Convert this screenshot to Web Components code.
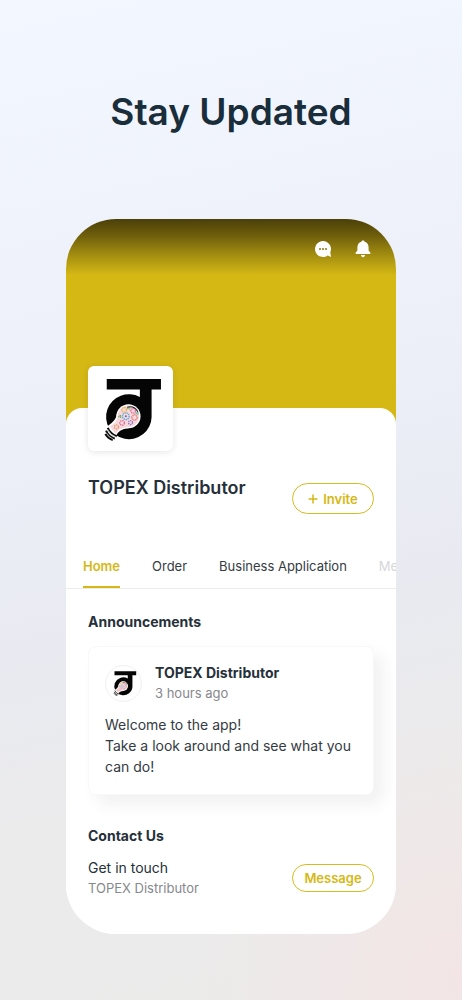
<!DOCTYPE html>
<html lang="en">
<head>
<meta charset="utf-8">
<meta name="viewport" content="width=device-width, initial-scale=1">
<title>TOPEX Distributor</title>
<style>
  body {
    margin: 0;
    min-height: 100vh;
    font-family: Inter, "Liberation Sans", sans-serif;
    color: #26303a;
    background:
      radial-gradient(circle at 100% 98%, #f3e5e5 0%, rgba(243, 229, 229, 0) 26%),
      linear-gradient(168deg, #f3f7ff 0%, #eceff8 42%, #e9eaf1 60%, #ebebec 76%, #ebebea 100%);
  }
</style>
</head>
<body>
<promo-screen heading="Stay Updated">
  <phone-frame>
    <cover-bar slot="cover"></cover-bar>
    <profile-head name="TOPEX Distributor">
      <pill-button icon="plus">Invite</pill-button>
    </profile-head>
    <tab-bar>
      <tab-link active>Home</tab-link>
      <tab-link>Order</tab-link>
      <tab-link>Business Application</tab-link>
      <tab-link faded>Me</tab-link>
    </tab-bar>
    <page-section heading="Announcements">
      <post-card author="TOPEX Distributor" time="3 hours ago">Welcome to the app!<br>Take a look around and see what you can do!</post-card>
    </page-section>
    <page-section heading="Contact Us">
      <contact-row label="Get in touch" name="TOPEX Distributor">
        <pill-button small>Message</pill-button>
      </contact-row>
    </page-section>
  </phone-frame>
</promo-screen>

<script>
class PromoScreen extends HTMLElement {
  constructor() {
    super();
    this.attachShadow({mode: "open"});
  }
  connectedCallback() {
    this.shadowRoot.innerHTML = `
      <style>
        :host { display: block; padding: 90px 66px 66px; }
        h1 {
          margin: 0 0 85px;
          font-size: 37px;
          line-height: 44px;
          font-weight: 600;
          text-align: center;
          white-space: nowrap;
          color: #192d3b;
        }
      </style>
      <h1>${this.getAttribute("heading")}</h1>
      <slot></slot>`;
  }
}

class PhoneFrame extends HTMLElement {
  constructor() {
    super();
    this.attachShadow({mode: "open"}).innerHTML = `
      <style>
        :host {
          display: block;
          overflow: hidden;
          border-radius: 50px;
          background: #fff;
        }
        .sheet {
          display: flow-root;
          position: relative;
          margin-top: -16px;
          padding-bottom: 28px;
          border-radius: 16px 16px 0 0;
          background: #fff;
        }
      </style>
      <slot name="cover"></slot>
      <main class="sheet"><slot></slot></main>`;
  }
}

class CoverBar extends HTMLElement {
  constructor() {
    super();
    this.attachShadow({mode: "open"}).innerHTML = `
      <style>
        :host {
          display: block;
          height: 205px;
          background: linear-gradient(#4b4009 0, #6d5d0b 16px, #a38d10 36px, #d5b814 56px);
        }
        div {
          display: flex;
          justify-content: flex-end;
          gap: 20px;
          padding: 20px 23px;
        }
        button {
          display: flex;
          padding: 0;
          border: 0;
          background: none;
          color: #fff;
        }
      </style>
      <div>
        <button aria-label="Messages">
          <svg width="20" height="20" viewBox="0 0 20 20">
            <path d="M10 2a8 8 0 1 0 4.700 14.500L18 18l-.7-4.700A8 8 0 0 0 10 2z" fill="currentColor"/>
            <g fill="#8a760e"><circle cx="7" cy="10" r="1"/><circle cx="10" cy="10" r="1"/><circle cx="13" cy="10" r="1"/></g>
          </svg>
        </button>
        <button aria-label="Notifications">
          <svg width="20" height="20" viewBox="0 0 20 20" fill="currentColor">
            <path d="M10 1.500c.9 0 1.500.5 1.600 1.200 2.700.7 4 2.900 4 5.700v3.200l1.600 2c.6.800.2 1.500-.6 1.500H3.400c-.8 0-1.200-.7-.6-1.500l1.600-2V8.400c0-2.800 1.300-5 4-5.700.1-.7.700-1.200 1.600-1.200z"/>
            <path d="M8 16h4c-.1 1.400-.9 2.200-2 2.200S8.100 17.400 8 16z"/>
          </svg>
        </button>
      </div>`;
  }
}

// Black letter mark with a light bulb full of coloured gears
class BrandLogo extends HTMLElement {
  constructor() {
    super();
    this.attachShadow({mode: "open"}).innerHTML = `
      <style>
        :host { display: block; }
        svg { display: block; width: 100%; height: 100%; }
      </style>
      <svg viewBox="26 18 254 254" role="img" aria-label="Logo">
        <path d="M82 57h162v31h-28v83a68 67 0 1 1-35-60V88H82z" fill="#050505"/>
        <g fill="#fff">
          <circle cx="147" cy="168" r="36"/>
          <path d="M112 160q0 20-28 38l24 32q8-24 40-26z"/>
        </g>
        <g fill="#f6d9dd">
          <circle cx="147" cy="168" r="32"/>
          <path d="M115 168q-1 16-24 31l18 22q8-19 38-21z"/>
        </g>
        <g fill="none" stroke-width="4" stroke-dasharray="4 2">
          <circle cx="139" cy="168" r="10" stroke="#5aa7dc"/>
          <circle cx="161" cy="152" r="7" stroke="#e46a9b"/>
          <circle cx="134" cy="149" r="7" stroke="#e8b14a"/>
          <circle cx="165" cy="172" r="8" stroke="#df7472"/>
          <circle cx="153" cy="187" r="6" stroke="#9779c9"/>
          <circle cx="128" cy="188" r="7" stroke="#e06d9c"/>
          <circle cx="111" cy="200" r="6" stroke="#e39b68"/>
          <circle cx="148" cy="144" r="3" stroke="#75b56c"/>
          <circle cx="173" cy="159" r="3" stroke="#59ae90"/>
          <circle cx="121" cy="169" r="3" stroke="#70b06a"/>
        </g>
        <circle cx="139" cy="168" r="3" fill="#4173b9"/>
        <path d="M143 141q22-5 32 14" fill="none" stroke="#222" stroke-width="3"/>
        <path d="M85 203q7 18 27 25M80 211q7 18 26 24M78 221q6 13 22 18" fill="none" stroke="#080808" stroke-width="6"/>
        <path d="M84 207q8 17 25 23M80 217q8 14 22 20" fill="none" stroke="#fff" stroke-width="2"/>
      </svg>`;
  }
}

class ProfileHead extends HTMLElement {
  constructor() {
    super();
    this.attachShadow({mode: "open"});
  }
  connectedCallback() {
    this.shadowRoot.innerHTML = `
      <style>
        :host { display: block; padding: 0 22px; }
        brand-logo {
          width: 85px;
          height: 85px;
          margin-top: -42px;
          border-radius: 6px;
          background: #fff;
          box-shadow: 0 1px 6px rgba(40, 40, 60, .12);
        }
        .row {
          display: flex;
          justify-content: space-between;
          align-items: flex-start;
          padding-top: 24px;
        }
        h2 { margin: 0; font-size: 18px; line-height: 26px; font-weight: 600; white-space: nowrap; }
        slot { display: block; padding-top: 8px; }
      </style>
      <brand-logo></brand-logo>
      <div class="row">
        <h2>${this.getAttribute("name")}</h2>
        <slot></slot>
      </div>`;
  }
}

class PillButton extends HTMLElement {
  constructor() {
    super();
    this.attachShadow({mode: "open"});
  }
  connectedCallback() {
    const plus = this.getAttribute("icon") === "plus"
      ? `<svg width="10" height="10" viewBox="0 0 10 10"><path d="M5 .5v9M.5 5h9" stroke="currentColor" stroke-width="1.500"/></svg>`
      : "";
    this.shadowRoot.innerHTML = `
      <style>
        :host { display: block; }
        button {
          display: flex;
          align-items: center;
          justify-content: center;
          gap: 5px;
          width: 82px;
          height: 31px;
          padding: 0;
          border: 1px solid #d8bb1e;
          border-radius: 16px;
          background: #fff;
          color: #d5b814;
          font: 600 13px/18px Inter, "Liberation Sans", sans-serif;
        }
        :host([small]) button { height: 28px; }
      </style>
      <button>${plus}<span><slot></slot></span></button>`;
  }
}

class TabBar extends HTMLElement {
  constructor() {
    super();
    this.attachShadow({mode: "open"}).innerHTML = `
      <style>
        :host { display: block; margin-top: 34px; }
        nav {
          display: flex;
          gap: 32px;
          overflow: hidden;
          padding-left: 17px;
          border-bottom: 1px solid #ececee;
        }
      </style>
      <nav><slot></slot></nav>`;
  }
}

class TabLink extends HTMLElement {
  constructor() {
    super();
    this.attachShadow({mode: "open"}).innerHTML = `
      <style>
        :host { display: block; flex: none; }
        a {
          display: block;
          padding: 9px 0 11px;
          border-bottom: 2px solid transparent;
          font-size: 13px;
          line-height: 18px;
          color: #343b43;
          text-decoration: none;
          white-space: nowrap;
        }
        :host([active]) a { color: #d5b814; border-color: #d5b814; font-weight: 600; }
        :host([faded]) a { color: #d6d6d9; }
      </style>
      <a href="#"><slot></slot></a>`;
  }
}

class PageSection extends HTMLElement {
  constructor() {
    super();
    this.attachShadow({mode: "open"});
  }
  connectedCallback() {
    this.shadowRoot.innerHTML = `
      <style>
        :host { display: block; padding: 23px 22px 8px; }
        h3 { margin: 0; font-size: 14px; line-height: 20px; font-weight: 700; }
      </style>
      <section>
        <h3>${this.getAttribute("heading")}</h3>
        <slot></slot>
      </section>`;
  }
}

class PostCard extends HTMLElement {
  constructor() {
    super();
    this.attachShadow({mode: "open"});
  }
  connectedCallback() {
    this.shadowRoot.innerHTML = `
      <style>
        :host {
          display: block;
          margin-top: 14px;
          padding: 16px 16px 17px;
          border: 1px solid #f8f8f9;
          border-radius: 8px;
          background: #fff;
          box-shadow: 9px 9px 16px rgba(50, 50, 75, .07);
        }
        header { display: flex; align-items: center; gap: 13px; }
        .avatar {
          display: flex;
          align-items: center;
          justify-content: center;
          box-sizing: border-box;
          width: 37px;
          height: 37px;
          border: 1px solid #f0f0f0;
          border-radius: 50%;
        }
        brand-logo { width: 34px; height: 34px; flex: none; }
        h4 { margin: 0; font-size: 14px; line-height: 20px; font-weight: 700; }
        time { display: block; font-size: 13px; line-height: 20px; color: #85888c; }
        p { margin: 11px 0 0; font-size: 14px; line-height: 21px; color: #343b43; }
      </style>
      <article>
        <header>
          <div class="avatar"><brand-logo></brand-logo></div>
          <div>
            <h4>${this.getAttribute("author")}</h4>
            <time>${this.getAttribute("time")}</time>
          </div>
        </header>
        <p><slot></slot></p>
      </article>`;
  }
}

class ContactRow extends HTMLElement {
  constructor() {
    super();
    this.attachShadow({mode: "open"});
  }
  connectedCallback() {
    this.shadowRoot.innerHTML = `
      <style>
        :host {
          display: flex;
          align-items: center;
          justify-content: space-between;
          margin-top: 12px;
        }
        p { margin: 0; font-size: 14px; line-height: 20px; }
        .name { font-size: 13px; color: #85888c; }
      </style>
      <div>
        <p>${this.getAttribute("label")}</p>
        <p class="name">${this.getAttribute("name")}</p>
      </div>
      <slot></slot>`;
  }
}

customElements.define("brand-logo", BrandLogo);
customElements.define("promo-screen", PromoScreen);
customElements.define("phone-frame", PhoneFrame);
customElements.define("cover-bar", CoverBar);
customElements.define("profile-head", ProfileHead);
customElements.define("pill-button", PillButton);
customElements.define("tab-bar", TabBar);
customElements.define("tab-link", TabLink);
customElements.define("page-section", PageSection);
customElements.define("post-card", PostCard);
customElements.define("contact-row", ContactRow);
</script>
</body>
</html>
